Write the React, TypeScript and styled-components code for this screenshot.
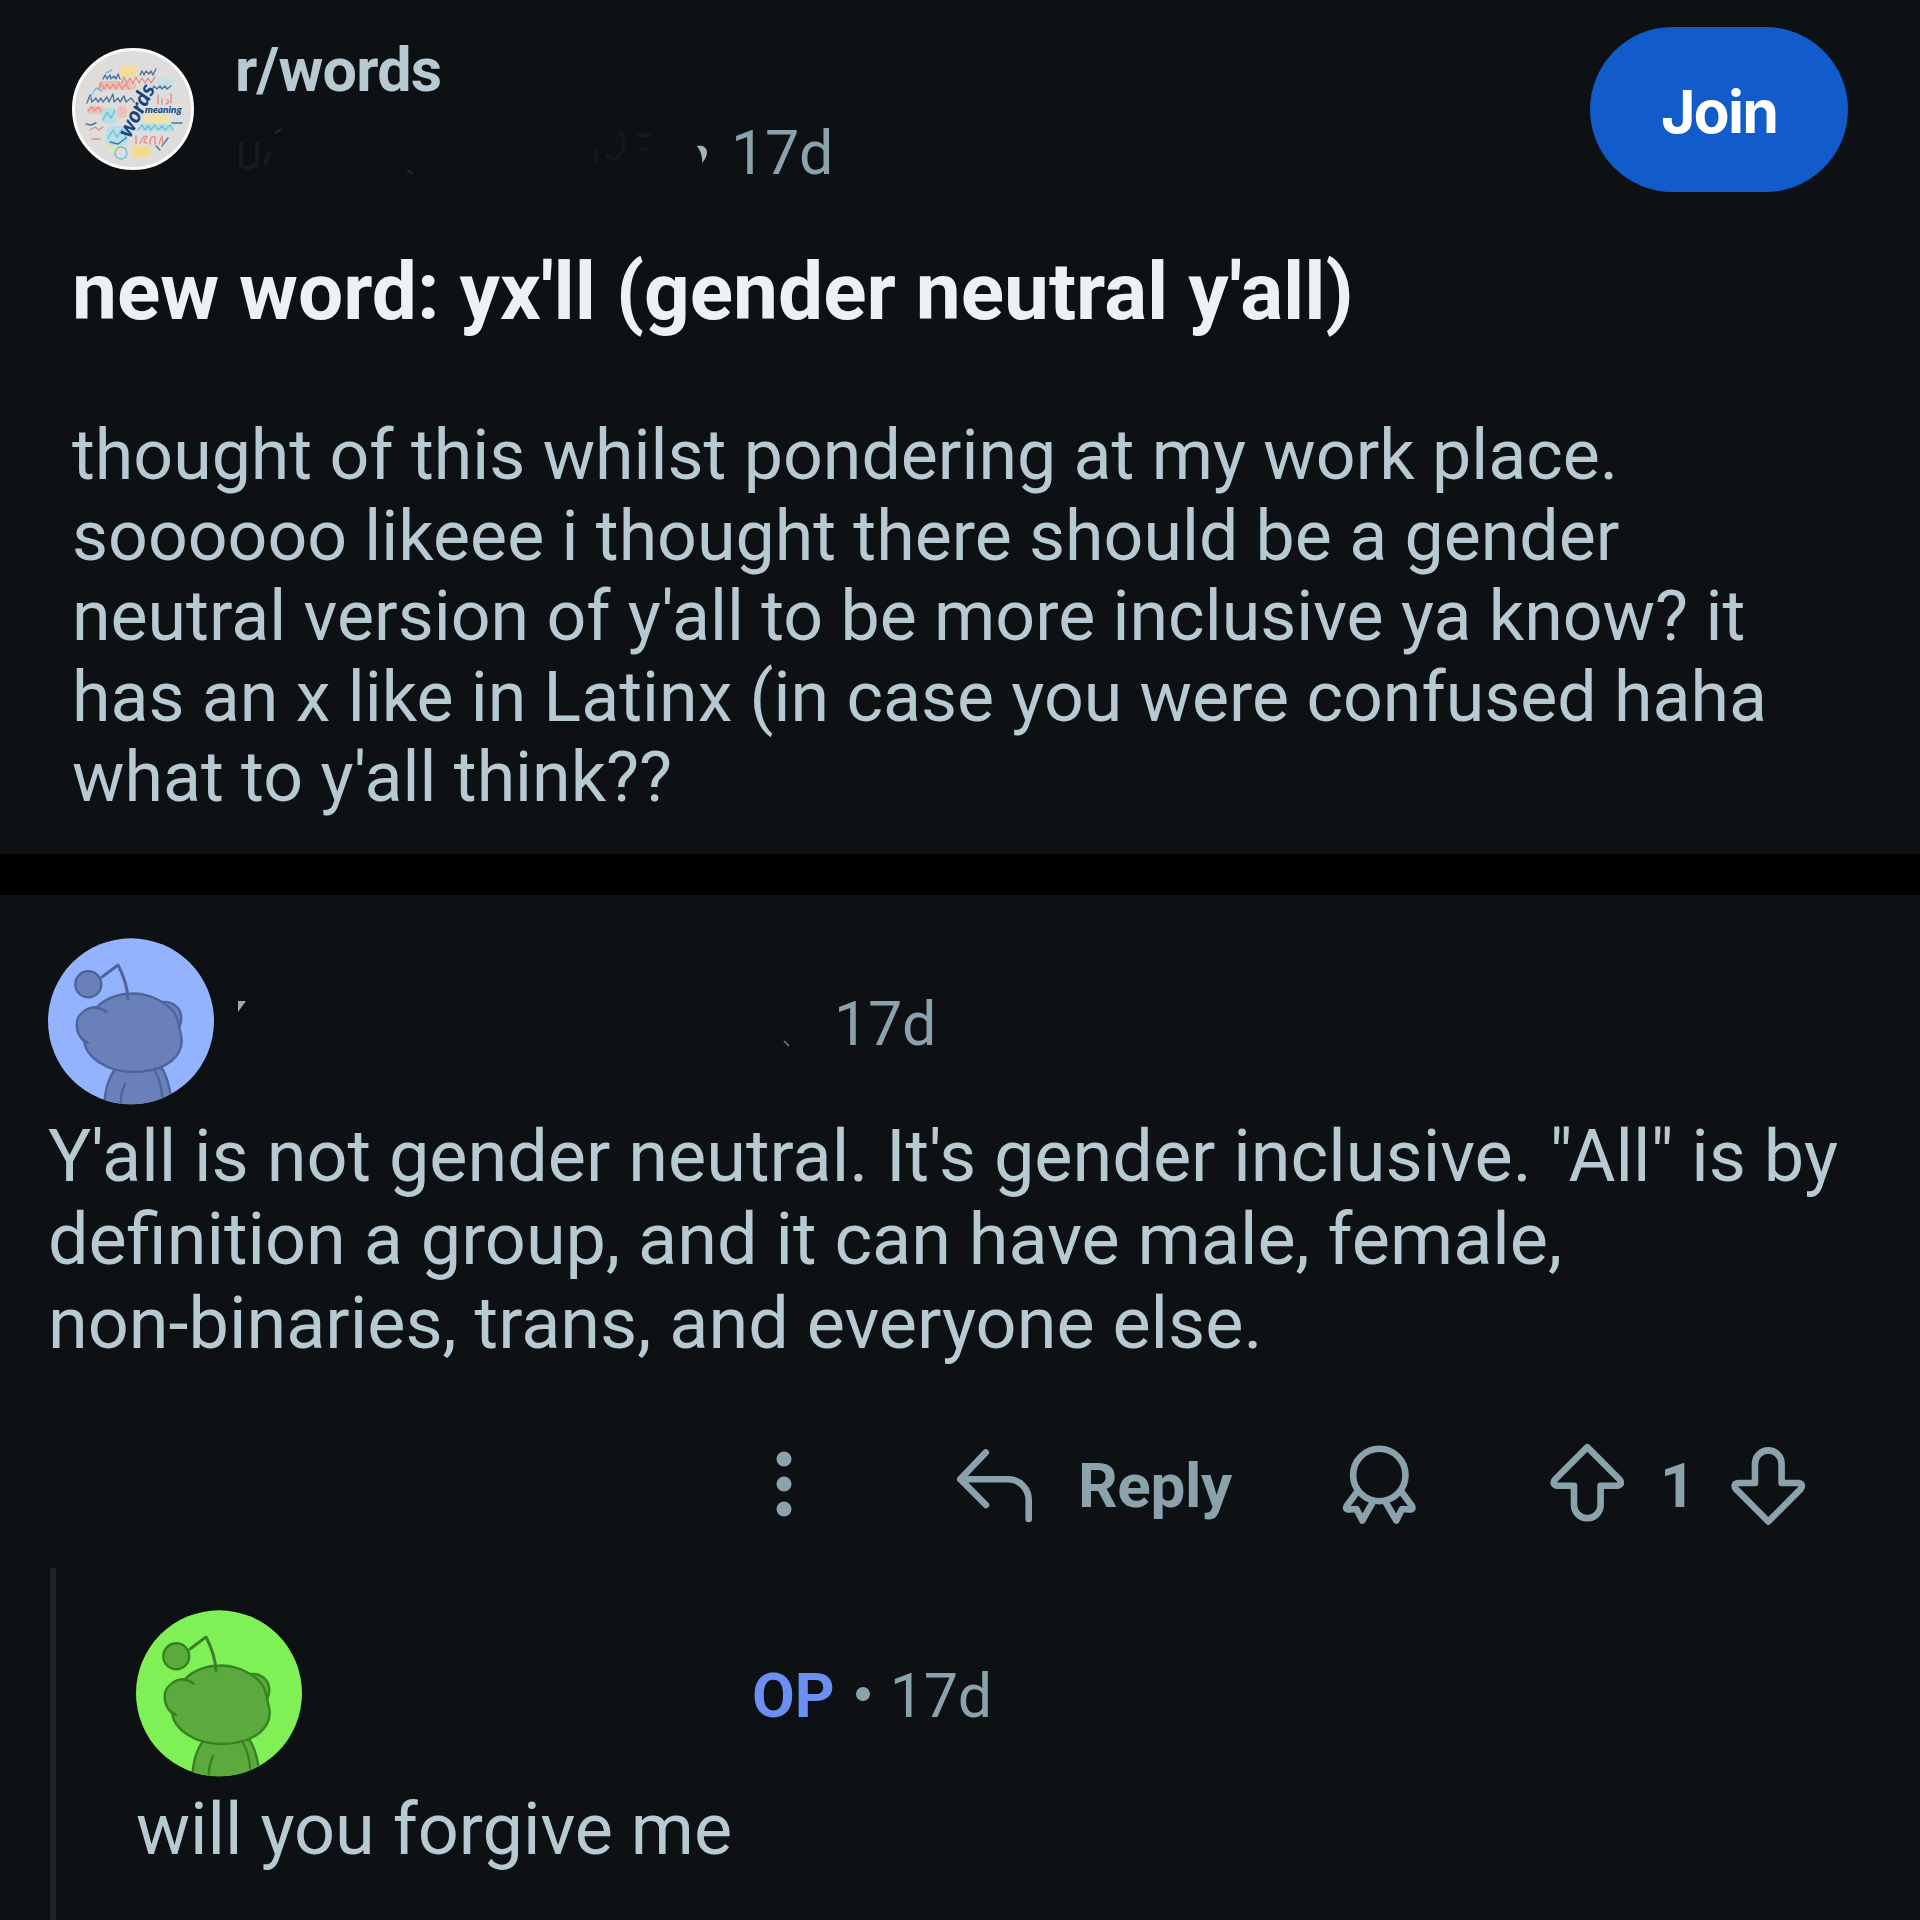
import React from 'react';
import styled, { createGlobalStyle } from 'styled-components';

const Global = createGlobalStyle`
  * { box-sizing: border-box; }
  html, body { margin: 0; background: #0d1114; }
  body { font-family: Roboto, "Liberation Sans", sans-serif; }
`;
const Page = styled.main`
  width: 1920px;
  height: 1920px;
  overflow: hidden;
  background: #0d1114;
  color: #b7c9d1;
  display: flex;
  flex-direction: column;
`;
const Post = styled.article`
  height: 854px;
  padding: 27px 72px 0 72px;
`;
const PostHeader = styled.header`
  display: flex;
  height: 165px;
`;
const CommunityIcon = styled.svg`
  width: 122px;
  height: 122px;
  margin: 21px 41px 0 0;
  flex: none;
`;
const PostMeta = styled.div`
  flex: 1;
`;
const Community = styled.div`
  font-size: 61px;
  font-weight: 700;
  line-height: 72px;
  margin-top: 7px;
  letter-spacing: -0.75px;
`;
const Byline = styled.div`
  display: flex;
  align-items: center;
  margin-top: 11px;
  height: 72px;
`;
const ErasedName = styled.svg<{ $w: number }>`
  width: ${p => p.$w}px;
  height: 72px;
  flex: none;
`;
const Age = styled.span<{ $drop?: number }>`
  font-size: 61px;
  line-height: 72px;
  padding-top: ${p => p.$drop ?? 0}px;
  letter-spacing: -0.3px;
  color: #8ba2ad;
`;
const JoinButton = styled.button`
  width: 258px;
  height: 165px;
  border: 0;
  border-radius: 83px;
  background: #115bca;
  color: #fff;
  font: 700 59px/72px Inter, Roboto, sans-serif;
  padding: 4px 0 0;
  letter-spacing: -1.8px;
`;
const Title = styled.h1`
  margin: 50px 0 0;
  font-size: 80.2px;
  font-weight: 700;
  line-height: 100px;
  color: #eef1f3;
  white-space: nowrap;
`;
const Body = styled.p<{ $size: number; $line: number; $gap: number }>`
  margin: ${p => p.$gap}px 0 0;
  font-size: ${p => p.$size}px;
  line-height: ${p => p.$line}px;
  white-space: pre;
`;
const Divider = styled.hr`
  width: 100%;
  height: 41px;
  margin: 0;
  border: 0;
  background: #000;
  flex: none;
`;
const Comment = styled.article`
  height: 673px;
  padding: 42px 48px 0;
`;
const CommentHeader = styled.header`
  display: flex;
  align-items: center;
  height: 168px;
`;
const Avatar = styled.svg`
  width: 167px;
  height: 167px;
  flex: none;
`;
const Actions = styled.footer`
  display: flex;
  align-items: center;
  height: 100px;
  margin-top: 69px;
  padding-left: 723px;
  color: #8ba2ad;
`;
const Icon = styled.svg<{ $w: number; $gap?: number }>`
  width: ${p => p.$w}px;
  height: 90px;
  margin-left: ${p => p.$gap ?? 0}px;
  flex: none;
  fill: none;
  stroke: currentColor;
  stroke-width: 6.6;
  stroke-linecap: round;
  stroke-linejoin: round;
`;
const ActionText = styled.span<{ $gap: number; $w: number }>`
  width: ${p => p.$w}px;
  margin-left: ${p => p.$gap}px;
  padding-top: 4px;
  font-size: 62px;
  font-weight: 700;
  line-height: 72px;
  letter-spacing: -0.4px;
`;
const Thread = styled.section`
  height: 352px;
  margin-left: 50px;
  border-left: 6px solid #1e2326;
  padding: 41px 0 0 80px;
`;
const OpTag = styled.span`
  font-size: 62px;
  font-weight: 700;
  line-height: 72px;
  padding-top: 6px;
  color: #6b8ff2;
`;
const Dot = styled.i`
  width: 14px;
  height: 14px;
  margin: 1px 20px 0 21px;
  border-radius: 50%;
  background: #8ba2ad;
`;

type SnooColors = { bg: string; body: string; line: string };
function Snoo({ bg, body, line }: SnooColors) {
  const id = 'clip' + bg.slice(1);
  return (
    <Avatar viewBox="0 0 167 167">
      <clipPath id={id}><circle cx="83" cy="83.3" r="83" /></clipPath>
      <g clipPath={`url(#${id})`} stroke={line} strokeWidth="2.4" fill={body} strokeLinecap="round" strokeLinejoin="round">
        <rect width="167" height="167" fill={bg} stroke="none" />
        <circle cx="40.3" cy="46.3" r="13" />
        <path d="M113 129Q122 142 124 170H106V130Z" />
        <path d="M67 131Q57 144 56 170H114Q116 148 106 131Z" />
        <path d="M77 146Q72 157 73 168" fill="none" />
        <path d="M114 64Q124 63 130 70Q136 78 131 90Z" />
        <path d="M49 69C58 60 70 55.5 86 55.5C104 56 121 66 127 76C131 83 131 91 133 97C137 116 121 133 86 134C58 134 38 119 36 103C26 94 28 81 32 77C37 71 42 69 49 69Z" />
        <path d="M47 70Q54 70 58 74M36 102L40 105" fill="none" />
        <path d="M54 39 70 27Q79 44 80 61" fill="none" strokeWidth="3" />
      </g>
    </Avatar>
  );
}

function WordCloud() {
  return (
    <CommunityIcon viewBox="0 0 122 122">
      <circle cx="61" cy="61" r="59.5" fill="#dfdddb" stroke="#fafafa" strokeWidth="3" />
      <g opacity=".75">
        <rect x="47" y="17" width="18" height="12" rx="5" fill="#f7dd85" />
        <rect x="72" y="66" width="25" height="9" rx="4" fill="#f7e39a" />
        <rect x="60" y="98" width="18" height="11" rx="4" fill="#f9dc72" />
        <rect x="36" y="95" width="14" height="8" rx="4" fill="#e2e89c" />
        <rect x="26" y="33" width="38" height="9" rx="4" fill="#f0b7af" />
        <rect x="15" y="58" width="17" height="8" rx="4" fill="#f0b9b0" />
        <rect x="45" y="58" width="10" height="12" rx="4" fill="#f0b9b0" />
        <rect x="30" y="60" width="14" height="16" rx="5" fill="#a9ddea" />
        <rect x="34" y="78" width="22" height="20" rx="7" fill="#a6dff0" />
        <rect x="68" y="76" width="34" height="7" rx="3" fill="#aadde8" />
        <rect x="84" y="30" width="18" height="9" rx="4" fill="#bde2ea" />
      </g>
      <g fill="none" strokeLinecap="round" strokeLinejoin="round" strokeWidth="1.4">
        <path stroke="#4d74a3" d="M31 31l2-4 2 4 3-4 1 4 3-3 2 3 2-5 2 5M68 27l2-4 2 4 2-4 3 3 2-3 2 4 3-6M15 55l3-8 2 7 4-4 2 4 3-4 2 4 4-5 2 5 4-8 1 8 4-4 2 4 4-6 2 6 5-4 3 4M80 42l2-4 3 3 3-3 2 3 3-3 2 3 4-3M14 76l5 1 5-2M38 94l8 2 8-6M100 75h10M84 98l4 4M96 90l-6 8" />
        <path stroke="#e58f88" d="M50 35l2-6 3 6 3-5 3 5 3-6 3 6 3-5 3 5 3-5 3 5 4-6M27 41l2-6 3 6 3-5 3 5 3-5 3 5 3-6 3 6 4-5 3 5M86 56v-9M90 56v-5M94 56q5-2 1-4M99 46v9M16 63l4-4 2 4 4-4 3 4M18 82l5-3 4 3 4-3M20 91h8M64 96v-8M68 95q4-9 7-6-6 6 0 6M78 96q0-9 5-7v7M87 96l3-8 1 8" />
        <path stroke="#6ec2da" d="M66 82l4-5 3 5 3-4 3 4 4-5 3 5 4-4 3 4 5-5 3 5M31 72l4-8 4 6 4-8M36 90l5-8 4 7 5-8 4 8M18 50l6-10 6 3M34 25l6-3" />
        <circle cx="49" cy="105" r="6" stroke="#6ec2da" />
      </g>
      <g fontFamily="Lato, sans-serif" fontStyle="italic" fontWeight="900" fill="#174580">
        <text x="73" y="65" fontSize="10">meaning</text>
        <text transform="translate(58 91) rotate(-63)" fontSize="22">words</text>
      </g>
    </CommunityIcon>
  );
}

export default function App() {
  return (
    <Page>
      <Global />
      <Post>
        <PostHeader>
          <WordCloud />
          <PostMeta>
            <Community>r/words</Community>
            <Byline>
              <ErasedName $w={496} viewBox="0 0 496 72">
                <path d="M6 25V49Q14 54 21 47M22 25V50M30 48 35 34" fill="none" stroke="#171b1e" strokeWidth="4" />
                <path d="M40 16 47 12" stroke="#262b2e" strokeWidth="2" />
                <path d="M361 32V46M371 37Q384 50 390 25L385 14M402 18H418M405 32H413" fill="none" stroke="#13181b" strokeWidth="4" />
                <path d="M172 53 178 57" stroke="#252a2d" strokeWidth="2" />
                <path d="M462 29C472 27 476 36 467 46Q468 37 462 29Z" fill="#a3b3ba" />
              </ErasedName>
              <Age>17d</Age>
            </Byline>
          </PostMeta>
          <JoinButton>Join</JoinButton>
        </PostHeader>
        <Title>new word: yx'll (gender neutral y'all)</Title>
        <Body $size={69.85} $line={80.6} $gap={73}>{`thought of this whilst pondering at my work place.
soooooo likeee i thought there should be a gender
neutral version of y'all to be more inclusive ya know? it
has an x like in Latinx (in case you were confused haha
what to y'all think??`}</Body>
      </Post>
      <Divider />
      <Comment>
        <CommentHeader>
          <Snoo bg="#94b3ff" body="#6981b8" line="#4d649d" />
          <ErasedName $w={619} viewBox="0 0 619 72">
            <path d="M23 16H31L23 27Z" fill="#9ba9a8" />
            <path d="M569 56 574 61" stroke="#5c676c" strokeWidth="2" />
          </ErasedName>
          <Age $drop={6}>17d</Age>
        </CommentHeader>
        <Body $size={72} $line={83.3} $gap={10}>{`Y'all is not gender neutral. It's gender inclusive. "All" is by
definition a group, and it can have male, female,
non-binaries, trans, and everyone else.`}</Body>
        <Actions>
          <Icon $w={26} viewBox="0 0 26 90">
            <g fill="currentColor" stroke="none"><circle cx="13" cy="20" r="7.5" /><circle cx="13" cy="45" r="7.5" /><circle cx="13" cy="70" r="7.5" /></g>
          </Icon>
          <Icon $w={80} $gap={158} viewBox="0 0 80 90"><path d="M30.7 13.5 5.3 40.2 31 66M5.3 40.2H53A20.7 20.7 0 0 1 73.7 61V80" /></Icon>
          <ActionText $gap={43} $w={154}>Reply</ActionText>
          <Icon $w={80} $gap={108} viewBox="0 0 80 90">
            <circle cx="39.3" cy="36" r="26.2" />
            <path d="M17 53 7 66.5Q4.5 70.5 9 70.5L16.5 70 22.3 81.5 33.5 62M61.6 53 71.6 66.5Q74 70.5 69.6 70.5L62 70 56.3 81.5 45 62" />
          </Icon>
          <Icon $w={80} $gap={126} viewBox="0 0 80 90"><path d="M41.3 8.2 9 40.5Q5.5 45.5 11 46.7H28V66A13.3 13.3 0 0 0 54.6 66V46.7H71.6Q77 45.5 73.6 40.5Z" /></Icon>
          <ActionText $gap={34} $w={35}>1</ActionText>
          <Icon $w={80} $gap={31.7} viewBox="0 0 80 90"><path d="M41.3 82.5 9 50.2Q5.5 45.2 11 44H28V24.7A13.3 13.3 0 0 1 54.6 24.7V44H71.6Q77 45.2 73.6 50.2Z" /></Icon>
        </Actions>
      </Comment>
      <Thread>
        <CommentHeader>
          <Snoo bg="#7ff157" body="#5baa3e" line="#398222" />
          <ErasedName $w={449} viewBox="0 0 449 72" />
          <OpTag>OP</OpTag>
          <Dot />
          <Age $drop={6}>17d</Age>
        </CommentHeader>
        <Body $size={72} $line={83} $gap={11}>will you forgive me</Body>
      </Thread>
    </Page>
  );
}
